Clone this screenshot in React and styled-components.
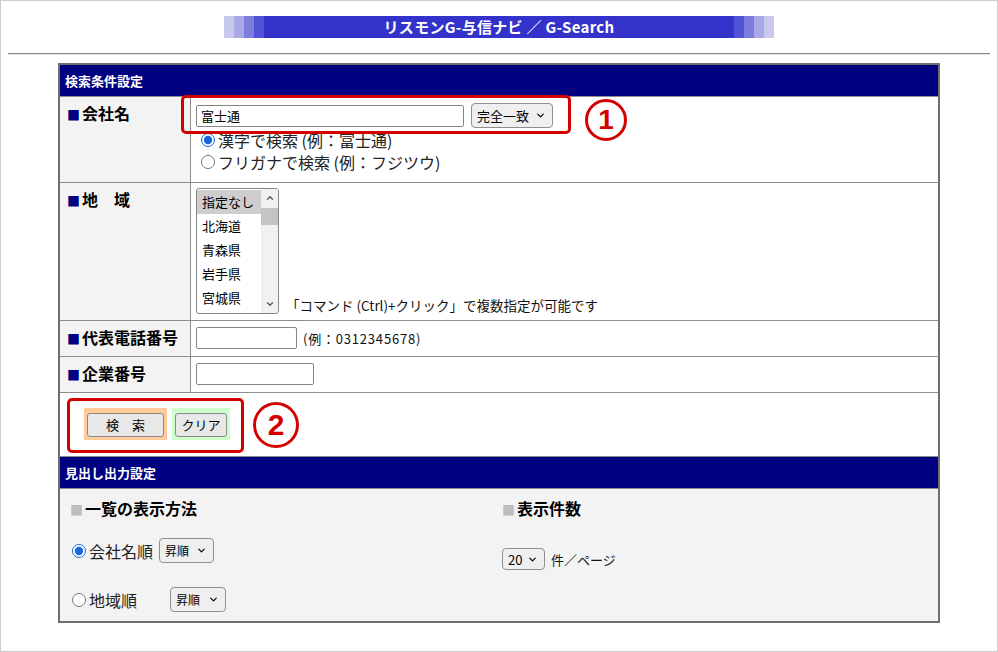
import React from "react";
import styled, { createGlobalStyle } from "styled-components";
import { ChevronDown, ChevronUp } from "lucide-react";

const GlobalStyle = createGlobalStyle`
  html, body {
    margin: 0;
    padding: 0;
    background: #fff;
  }
  body {
    font-family: "Noto Sans CJK JP", "Noto Sans", sans-serif;
    color: #000;
  }
  * {
    box-sizing: border-box;
  }
`;

const leftShades = ["#c9c9ee", "#a9a9e6", "#7d7ddc", "#5252d6"];
const prefectures = ["指定なし", "北海道", "青森県", "岩手県", "宮城県"];

const App = () => {
  return (
    <Frame>
      <GlobalStyle />
      <BannerWrap>
        <Banner>
          {leftShades.map((c, i) => (
            <Shade key={"l" + i} color={c} />
          ))}
          <BannerTitle>リスモンG-与信ナビ ／ G-Search</BannerTitle>
          {[...leftShades].reverse().map((c, i) => (
            <Shade key={"r" + i} color={c} />
          ))}
        </Banner>
      </BannerWrap>
      <Rule />

      <Table>
        <HeadCell>検索条件設定</HeadCell>

        <LabelCell height={85}>
          <Mark>■</Mark>会社名
        </LabelCell>
        <ValueCell>
          <FieldRow>
            <TextInput width={268} defaultValue="富士通" />
            <Select width={82} height={25} gap={7}>
              完全一致 <ChevronDown size={11} strokeWidth={2.6} />
            </Select>
          </FieldRow>
          <RadioLine>
            <Radio type="radio" name="kana" defaultChecked />
            漢字で検索 (例：富士通)
          </RadioLine>
          <RadioLine>
            <Radio type="radio" name="kana" />
            フリガナで検索 (例：フジツウ)
          </RadioLine>
          <Callout>
            <RedFrame style={{ width: 390, height: 39 }} />
            <Num size={42}>1</Num>
          </Callout>
        </ValueCell>

        <LabelCell height={137}>
          <Mark>■</Mark>地　域
        </LabelCell>
        <ValueCell>
          <AreaRow>
            <ListBox>
              <Options>
                {prefectures.map((p, i) => (
                  <Option key={p} selected={i === 0}>
                    {p}
                  </Option>
                ))}
              </Options>
              <ScrollBar>
                <ScrollArrow>
                  <ChevronUp size={10} strokeWidth={3} />
                </ScrollArrow>
                <Thumb />
                <ScrollArrow bottom>
                  <ChevronDown size={10} strokeWidth={3} />
                </ScrollArrow>
              </ScrollBar>
            </ListBox>
            <Hint>「コマンド (Ctrl)+クリック」で複数指定が可能です</Hint>
          </AreaRow>
        </ValueCell>

        <LabelCell height={35}>
          <Mark>■</Mark>代表電話番号
        </LabelCell>
        <ValueCell>
          <FieldRow>
            <TextInput width={101} />
            <Note wide>(例：0312345678)</Note>
          </FieldRow>
        </ValueCell>

        <LabelCell height={35}>
          <Mark>■</Mark>企業番号
        </LabelCell>
        <ValueCell>
          <FieldRow>
            <TextInput width={118} />
          </FieldRow>
        </ValueCell>

        <ButtonCell>
          <RedFrame>
            <ButtonWrap tone="#ffcc99">
              <Button width={77}>検　索</Button>
            </ButtonWrap>
            <ButtonWrap tone="#ccffcc">
              <Button width={52}>クリア</Button>
            </ButtonWrap>
          </RedFrame>
          <Num size={46}>2</Num>
        </ButtonCell>

        <HeadCell>見出し出力設定</HeadCell>

        <SettingsCell>
          <SettingCol pad={10}>
            <SettingTitle>
              <GrayMark>■</GrayMark>一覧の表示方法
            </SettingTitle>
            <SortRow>
              <Radio type="radio" name="sort" defaultChecked />
              <SortLabel>会社名順</SortLabel>
              <Select width={55} height={25} gap={6} small>
                昇順 <ChevronDown size={11} strokeWidth={2.6} />
              </Select>
            </SortRow>
            <SortRow>
              <Radio type="radio" name="sort" />
              <SortLabel>地域順</SortLabel>
              <Select width={56} height={25} gap={33} small>
                昇順 <ChevronDown size={11} strokeWidth={2.6} />
              </Select>
            </SortRow>
          </SettingCol>
          <SettingCol pad={3}>
            <SettingTitle>
              <GrayMark>■</GrayMark>表示件数
            </SettingTitle>
            <CountRow>
              <Select width={43} height={22} gap={0}>
                20 <ChevronDown size={11} strokeWidth={2.6} />
              </Select>
              <Note>件／ページ</Note>
            </CountRow>
          </SettingCol>
        </SettingsCell>
      </Table>
    </Frame>
  );
};

const Frame = styled.div`
  width: 998px;
  height: 652px;
  border: 1px solid #cdcdcd;
  background: #fff;
  overflow: hidden;
`;

const BannerWrap = styled.div`
  padding-top: 15px;
  display: flex;
  justify-content: center;
`;

const Banner = styled.div`
  width: 550px;
  height: 22px;
  display: flex;
`;

const Shade = styled.div`
  width: 10px;
  height: 100%;
  background: ${({ color }) => color};
`;

const BannerTitle = styled.div`
  flex: 1;
  background: #3333cc;
  color: #fff;
  font-size: 15px;
  font-weight: 700;
  line-height: 22px;
  text-align: center;
  letter-spacing: 0.3px;
`;

const Rule = styled.div`
  margin: 15px 7px 0 7px;
  height: 2px;
  border-top: 1px solid #858585;
  border-bottom: 1px solid #e4e4e4;
`;

const Table = styled.div`
  width: 882px;
  margin: 8px auto 0;
  border: 2px solid #6e6e6e;
  background: #8c8c8c;
  display: grid;
  grid-template-columns: 130px 1fr;
  gap: 1px;
`;

const HeadCell = styled.div`
  grid-column: 1 / -1;
  height: 31px;
  background: #000080;
  color: #fff;
  font-size: 13px;
  font-weight: 700;
  display: flex;
  align-items: center;
  padding-left: 5px;
`;

const LabelCell = styled.div`
  height: ${({ height }) => height}px;
  background: #f3f3f3;
  padding: 6px 7px;
  font-size: 16px;
  font-weight: 700;
  line-height: 20px;
  white-space: nowrap;
`;

const Mark = styled.span`
  color: #000080;
  font-size: 13px;
  margin-right: 2px;
`;

const GrayMark = styled.span`
  color: #bdbdbd;
  font-size: 13px;
  margin-right: 2px;
`;

const ValueCell = styled.div`
  position: relative;
  background: #fff;
  padding: 6px 5px;
`;

const FieldRow = styled.div`
  display: flex;
  align-items: center;
`;

const TextInput = styled.input`
  width: ${({ width }) => width}px;
  height: 22px;
  border: 1px solid #858585;
  border-radius: 2px;
  padding: 0 4px;
  font-family: "Noto Sans CJK JP", sans-serif;
  font-size: 13px;
  color: #000;
  outline: none;
`;

const Select = styled.div`
  width: ${({ width }) => width}px;
  height: ${({ height }) => height}px;
  margin-left: ${({ gap }) => gap}px;
  display: inline-flex;
  align-items: center;
  justify-content: space-between;
  padding: 0 6px 0 5px;
  background: #efefef;
  border: 1px solid #8f8f8f;
  border-radius: 4px;
  font-size: ${({ small }) => (small ? "12px" : "13px")};
  color: #000;
  white-space: nowrap;
`;

const RadioLine = styled.label`
  display: flex;
  align-items: center;
  height: 22px;
  font-size: 16px;
  padding-left: 5px;
  color: #222;
  &:first-of-type {
    margin-top: 1px;
  }
`;

const Radio = styled.input`
  width: 14px;
  height: 14px;
  margin: 0 3px 0 0;
  accent-color: #1769d9;
`;

const Callout = styled.div`
  position: absolute;
  left: -10px;
  top: -2px;
  display: flex;
  align-items: flex-start;
  gap: 14px;
  pointer-events: none;
`;

const RedFrame = styled.div`
  border: 3px solid #d40000;
  border-radius: 5px;
  display: flex;
  gap: 5px;
  padding: 7px 11px 10px 14px;
`;

const Num = styled.span`
  width: ${({ size }) => size}px;
  height: ${({ size }) => size}px;
  margin-top: 4px;
  border: 3px solid #d40000;
  border-radius: 50%;
  color: #d40000;
  font-family: "Liberation Sans", Arial, sans-serif;
  font-weight: 700;
  font-size: ${({ size }) => Math.round(size * 0.66)}px;
  display: flex;
  align-items: center;
  justify-content: center;
  line-height: 1;
`;

const AreaRow = styled.div`
  display: flex;
  align-items: flex-end;
  margin-top: -1px;
`;

const ListBox = styled.div`
  width: 83px;
  height: 126px;
  border: 1px solid #858585;
  border-radius: 3px;
  display: flex;
  overflow: hidden;
`;

const Options = styled.div`
  flex: 1;
  padding-top: 1px;
`;

const Option = styled.div`
  height: 24px;
  line-height: 24px;
  padding-left: 5px;
  font-size: 13px;
  background: ${({ selected }) => (selected ? "#cecece" : "transparent")};
`;

const ScrollBar = styled.div`
  position: relative;
  width: 17px;
  background: #f1f1f1;
`;

const ScrollArrow = styled.div`
  position: absolute;
  left: 0;
  ${({ bottom }) => (bottom ? "bottom: 2px;" : "top: 2px;")}
  width: 17px;
  height: 14px;
  display: flex;
  align-items: center;
  justify-content: center;
  color: #555;
`;

const Thumb = styled.div`
  position: absolute;
  left: 0;
  top: 19px;
  width: 17px;
  height: 17px;
  background: #c4c4c4;
`;

const Hint = styled.span`
  font-size: 13.5px;
  margin-left: 7px;
  margin-bottom: 0;
  line-height: 18px;
  color: #111;
`;

const Note = styled.span`
  font-size: 13px;
  margin-left: 6px;
  color: #111;
  letter-spacing: ${({ wide }) => (wide ? "0.8px" : "0")};
`;

const ButtonCell = styled.div`
  grid-column: 1 / -1;
  height: 63px;
  background: #fff;
  padding: 5px 7px;
  display: flex;
  align-items: flex-start;
  gap: 9px;
`;

const ButtonWrap = styled.div`
  background: ${({ tone }) => tone};
  padding: 3px;
`;

const Button = styled.button`
  width: ${({ width }) => width}px;
  height: 24px;
  background: #e8e8e8;
  border: 1px solid #8a8a8a;
  border-radius: 3px;
  font-family: "Noto Sans CJK JP", sans-serif;
  font-size: 13px;
  color: #000;
  padding: 0;
`;

const SettingsCell = styled.div`
  grid-column: 1 / -1;
  height: 132px;
  background: #f3f3f3;
  display: grid;
  grid-template-columns: 1fr 1fr;
`;

const SettingCol = styled.div`
  padding: 9px 0 0 ${({ pad }) => pad}px;
`;

const SettingTitle = styled.div`
  font-size: 16px;
  font-weight: 700;
  line-height: 20px;
`;

const SortRow = styled.div`
  display: flex;
  align-items: center;
  height: 25px;
  margin-top: 18px;
  padding-left: 2px;
  & + & {
    margin-top: 24px;
  }
`;

const SortLabel = styled.span`
  font-size: 16px;
  color: #222;
`;

const CountRow = styled.div`
  display: flex;
  align-items: center;
  margin-top: 28px;
`;

export default App;
